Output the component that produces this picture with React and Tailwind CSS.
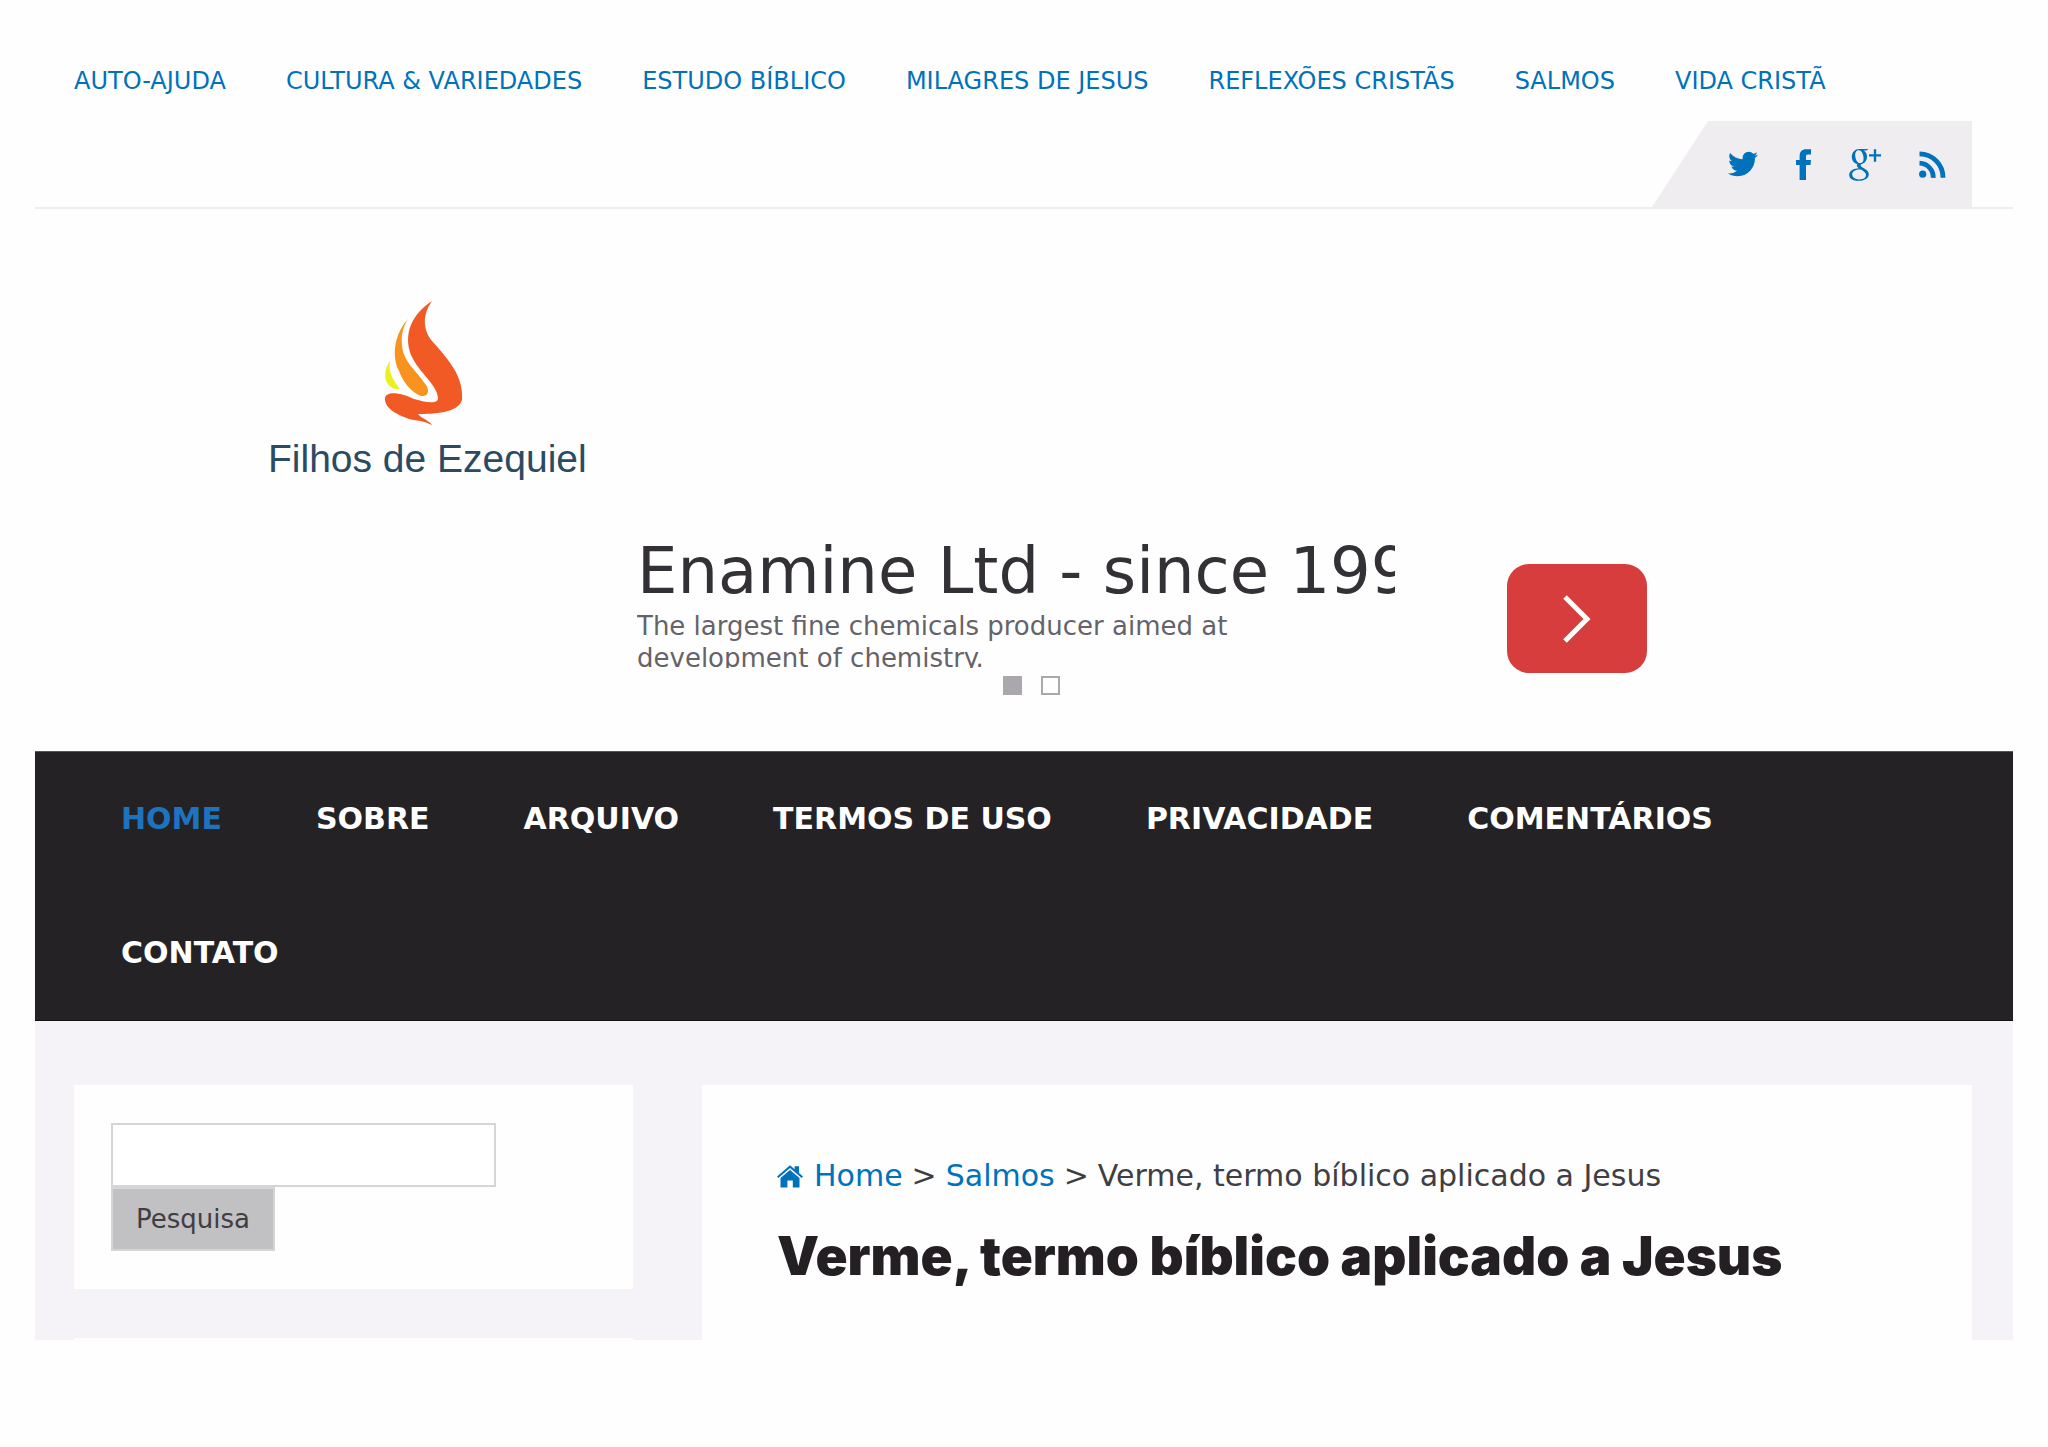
import React, { useState } from "react";
import { FaTwitter } from "react-icons/fa";

const topLinks = [
  "Auto-ajuda",
  "Cultura & Variedades",
  "Estudo Bíblico",
  "Milagres de Jesus",
  "Reflexões Cristãs",
  "Salmos",
  "Vida Cristã",
];

const menu = ["Home", "Sobre", "Arquivo", "Termos de uso", "Privacidade", "Comentários", "Contato"];

const FacebookIcon = () => (
  <svg width="15" height="31" viewBox="0 0 15 31" fill="currentColor">
    <path d="M15 0.2V5.4H12C10.4 5.4 10 6.2 10 7.6V11H15L14.5 16H10V31H3.6V16H0V11H3.6V7.4C3.6 2.6 5.8 0.2 10.4 0.2Z" />
  </svg>
);

const GooglePlusIcon = () => (
  <svg width="32" height="33" viewBox="0 0 32 33" fill="currentColor">
    <path
      fillRule="evenodd"
      d="M10.4 1H19.6L17.4 2.6H14.8C17 4 18 6 18 8.6C18 13.2 15 16.4 10.4 16.4C5.6 16.4 2.8 13.2 2.8 8.8C2.8 4.2 6 1 10.4 1ZM9.8 2.3C7.4 2.3 6.2 4.2 6.2 6.8C6.2 10.8 8 15.2 11 15.2C13.5 15.2 14.6 13.4 14.6 10.8C14.6 7 12.8 2.3 9.8 2.3Z"
    />
    <path
      fillRule="evenodd"
      d="M8.4 15.9L12.6 15.6C11.2 17 11.2 17.8 13.2 19.2C16.6 21.4 19.8 22.8 19.8 26.2C19.8 30.4 15.4 32.8 9.6 32.8C4 32.8 0.2 30.8 0.2 27C0.2 22.6 4.8 20.4 10 20.3C7.6 18.6 7.4 17.4 8.4 15.9ZM11.2 21.6C6.6 21.7 3.2 23.2 3.2 26.6C3.2 29.6 6.2 31.4 10.4 31.4C14.6 31.4 17 29.8 17 27C17 24.6 15 23.6 12.4 21.7C12 21.6 11.6 21.6 11.2 21.6Z"
    />
    <path d="M24.8 1.2H27.2V6.2H32V8.6H27.2V13.8H24.8V8.6H20V6.2H24.8Z" />
  </svg>
);

const RssIcon = () => (
  <svg width="27" height="27" viewBox="0 0 27 27" fill="none" stroke="currentColor" strokeWidth="4.8">
    <circle cx="3.7" cy="23.2" r="3.6" fill="currentColor" stroke="none" />
    <path d="M0.5 12.2A14 14 0 0 1 14.2 26.8" />
    <path d="M0.5 2.8A23.6 23.6 0 0 1 24 26.8" />
  </svg>
);

const HomeIcon = () => (
  <svg width="26" height="23" viewBox="0 0 26 23" fill="currentColor">
    <path d="M13 0.3L17.6 4.2V1.2H22V8.1L26 11.6L24.7 13L13 3.1L1.3 13L0 11.6Z" />
    <path d="M13 4.9L22.5 13V22.5H15.8V15.6H10.4V22.5H3.5V13Z" />
  </svg>
);

const FlameLogo = () => (
  <svg width="86" height="124" viewBox="0 0 86 124">
    <path
      d="M48 0C28 13 19 33 27 54C35 72 53 83 54 97C54 103 44 102 30 98C16 91 2 90 1 97C0 108 16 116 30 119C38 120 41 121 48 124C45 119 38 118 34 113C50 113 74 112 78 99C80 76 65 59 48 40C39 29 38 14 48 0Z"
      fill="#f15a25"
    />
    <path d="M24 18C11 32 7 54 15 70C19 81 27 91 37 95C44 96 46 90 42 84C33 70 18 60 18 43C17 34 19 26 24 18Z" fill="#f7931e" />
    <path d="M6 60C0 68 0 78 4 83C8 88 11 88 16 88C9 79 4 71 6 60Z" fill="#e9f01c" />
  </svg>
);

const socials = [
  { name: "Twitter", icon: <FaTwitter size={30} /> },
  { name: "Facebook", icon: <FacebookIcon /> },
  { name: "Google+", icon: <GooglePlusIcon /> },
  { name: "RSS", icon: <RssIcon /> },
];

function TopBar() {
  return (
    <div className="pt-[61px] pl-[39px] pr-[41px] border-b-2 border-[#eeecef]">
      <nav className="flex flex-wrap gap-x-[60px] pb-[20px] text-[24px] leading-[40px] uppercase text-[#0072bc]">
        {topLinks.map((link) => (
          <a key={link} href="#">
            {link}
          </a>
        ))}
      </nav>
      <div className="ml-auto h-[86px] w-[320px] pl-[76px] flex items-center gap-[38px] bg-[#efedf0] text-[#0072bc] [clip-path:polygon(56px_0,100%_0,100%_100%,0_100%)]">
        {socials.map((s) => (
          <a key={s.name} href="#" aria-label={s.name}>
            {s.icon}
          </a>
        ))}
      </div>
    </div>
  );
}

function AdBanner() {
  const [slide, setSlide] = useState(0);

  return (
    <div className="mt-[49px] mx-auto w-[1246px] pl-[236px]">
      <div className="flex justify-between items-start">
        <div className="w-[758px] h-[136px] overflow-hidden">
          <p className="text-[64px] leading-[78px] whitespace-nowrap text-[#333136]">Enamine Ltd - since 1991</p>
          <p className="w-[640px] text-[26px] leading-[32px] text-[#656368]">
            The largest fine chemicals producer aimed at development of chemistry.
          </p>
        </div>
        <a
          href="#"
          aria-label="Abrir"
          className="mt-[32px] w-[140px] h-[109px] rounded-[22px] bg-[#d83d3d] flex items-center justify-center"
        >
          <svg width="30" height="48" viewBox="0 0 30 48" fill="none" stroke="#fff" strokeWidth="5">
            <path d="M3 2L25 24L3 46" />
          </svg>
        </a>
      </div>
      <div className="flex gap-[19px] pl-[366px] pt-[3px]">
        {[0, 1].map((i) => (
          <button
            key={i}
            aria-label={`Slide ${i + 1}`}
            onClick={() => setSlide(i)}
            className={`w-[19px] h-[19px] border-2 border-[#aaa8ac] ${slide === i ? "bg-[#aaa8ac]" : ""}`}
          />
        ))}
      </div>
    </div>
  );
}

export default function App() {
  return (
    <div className="min-h-screen bg-[#fefefe] px-[35px] font-['DejaVu_Sans',sans-serif] text-[#403e43]">
      <header>
        <TopBar />
        <a href="#" className="mt-[92px] ml-[233px] w-fit flex flex-col items-center font-['Liberation_Sans',sans-serif] text-[#2b4a63]">
          <FlameLogo />
          <span className="mt-[10px] text-[39px] leading-[48px]">Filhos de Ezequiel</span>
        </a>
        <AdBanner />
        <nav className="mt-[56px] pl-[39px] pr-[41px] flex flex-wrap bg-[#242225] border-t border-t-[#57555a] border-b border-b-[#111012] text-[30px] leading-[134px] font-bold uppercase text-white">
          {menu.map((item, i) => (
            <a key={item} href="#" className={`px-[47px] ${i === 0 ? "text-[#1e73be]" : ""}`}>
              {item}
            </a>
          ))}
        </nav>
      </header>

      <div className="grid grid-cols-[559fr_1270fr] gap-[69px] pt-[64px] pl-[39px] pr-[41px] bg-[#f5f3f7]">
        <aside className="flex flex-col gap-[49px]">
          <form className="bg-[#fefefe] px-[37px] pt-[38px] pb-[38px]" onSubmit={(e) => e.preventDefault()}>
            <input
              type="text"
              aria-label="Pesquisa"
              className="block w-[385px] h-[64px] px-3 text-[26px] bg-white border-2 border-[#d5d4d7] outline-none"
            />
            <button className="block h-[64px] px-[23px] text-[26px] leading-[32px] bg-[#c1c0c2] border-2 border-[#d5d4d7]">
              Pesquisa
            </button>
          </form>
          <div className="flex-1 bg-[#fefefe]" />
        </aside>
        <main className="bg-[#fefefe] px-[75px] pt-[71px] pb-[50px]">
          <div className="flex items-center gap-[9px] text-[30px] leading-[40px]">
            <a href="#" className="flex items-center gap-[11px] text-[#0072bc]">
              <HomeIcon />
              Home
            </a>
            <span>&gt;</span>
            <a href="#" className="text-[#0072bc]">
              Salmos
            </a>
            <span>&gt;</span>
            <span>Verme, termo bíblico aplicado a Jesus</span>
          </div>
          <h1 className="mt-[26px] text-[53px] leading-[68px] font-black font-[Inter,sans-serif] text-[#231f22]">
            Verme, termo bíblico aplicado a Jesus
          </h1>
        </main>
      </div>
    </div>
  );
}
